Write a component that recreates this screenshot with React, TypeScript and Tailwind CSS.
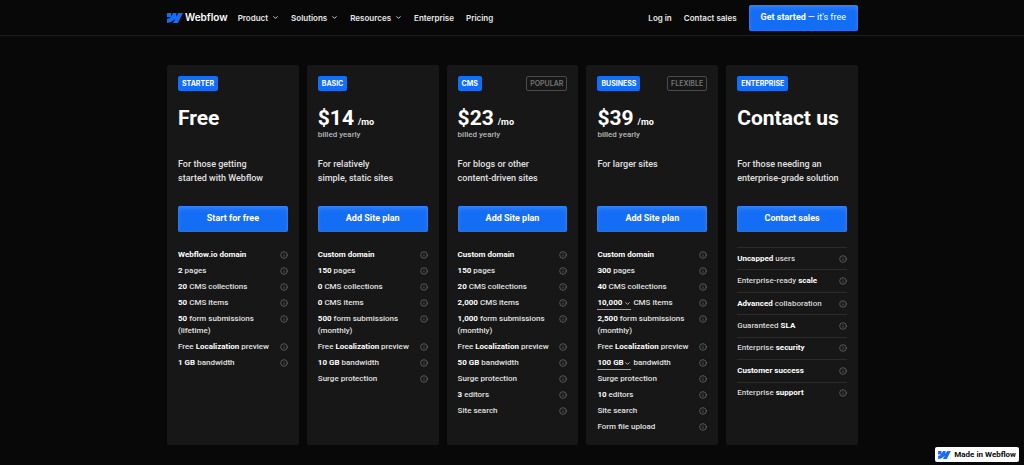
import type { ReactNode } from "react";
import { ChevronDown, Info } from "lucide-react";

type Plan = {
  id: string;
  label: string;
  tag?: string;
  title: string;
  monthly?: boolean;
  lines: string[];
  action: string;
  ruled?: boolean;
  features: ReactNode[];
};

function WebflowMark({ className }: { className: string }) {
  return (
    <svg viewBox="0 4.5 24 15" className={className} fill="#146ef5" aria-hidden="true">
      <path d="m24 4.515-7.658 14.97H9.149l3.205-6.204h-.144C9.566 16.713 5.621 18.973 0 19.485v-6.118s3.596-.213 5.71-2.435H0V4.515h6.417v5.278l.144-.001 2.622-5.277h4.854v5.244h.144l2.72-5.244H24Z" />
    </svg>
  );
}

function Amount({ label, options }: { label: string; options: string[] }) {
  return (
    <span className="relative mr-0.5 -mb-px inline-flex items-center border-b border-[#a0a0a0] align-top">
      <select
        aria-label={label}
        className="h-3 w-[34px] appearance-none bg-transparent font-bold text-white outline-none"
      >
        {options.map((option) => (
          <option key={option} className="bg-[#171717]">
            {option}
          </option>
        ))}
      </select>
      <ChevronDown
        className="pointer-events-none absolute right-0 size-[7px] text-[#c8c8c8]"
        strokeWidth={3}
      />
    </span>
  );
}

const localization = (
  <>
    Free <b>Localization</b> preview
  </>
);

const plans: Plan[] = [
  {
    id: "starter",
    label: "STARTER",
    title: "Free",
    lines: ["For those getting", "started with Webflow"],
    action: "Start for free",
    features: [
      <b>Webflow.io domain</b>,
      <><b>2</b> pages</>,
      <><b>20</b> CMS collections</>,
      <><b>50</b> CMS items</>,
      <><b>50</b> form submissions<br />(lifetime)</>,
      localization,
      <><b>1 GB</b> bandwidth</>,
    ],
  },
  {
    id: "basic",
    label: "BASIC",
    title: "$14",
    monthly: true,
    lines: ["For relatively", "simple, static sites"],
    action: "Add Site plan",
    features: [
      <b>Custom domain</b>,
      <><b>150</b> pages</>,
      <><b>0</b> CMS collections</>,
      <><b>0</b> CMS items</>,
      <><b>500</b> form submissions<br />(monthly)</>,
      localization,
      <><b>10 GB</b> bandwidth</>,
      "Surge protection",
    ],
  },
  {
    id: "cms",
    label: "CMS",
    tag: "POPULAR",
    title: "$23",
    monthly: true,
    lines: ["For blogs or other", "content-driven sites"],
    action: "Add Site plan",
    features: [
      <b>Custom domain</b>,
      <><b>150</b> pages</>,
      <><b>20</b> CMS collections</>,
      <><b>2,000</b> CMS items</>,
      <><b>1,000</b> form submissions<br />(monthly)</>,
      localization,
      <><b>50 GB</b> bandwidth</>,
      "Surge protection",
      <><b>3</b> editors</>,
      "Site search",
    ],
  },
  {
    id: "business",
    label: "BUSINESS",
    tag: "FLEXIBLE",
    title: "$39",
    monthly: true,
    lines: ["For larger sites"],
    action: "Add Site plan",
    features: [
      <b>Custom domain</b>,
      <><b>300</b> pages</>,
      <><b>40</b> CMS collections</>,
      <><Amount label="CMS items" options={["10,000"]} />CMS items</>,
      <><b>2,500</b> form submissions<br />(monthly)</>,
      localization,
      <><Amount label="Bandwidth" options={["100 GB"]} />bandwidth</>,
      "Surge protection",
      <><b>10</b> editors</>,
      "Site search",
      "Form file upload",
    ],
  },
  {
    id: "enterprise",
    label: "ENTERPRISE",
    title: "Contact us",
    lines: ["For those needing an", "enterprise-grade solution"],
    action: "Contact sales",
    ruled: true,
    features: [
      <><b>Uncapped</b> users</>,
      <>Enterprise-ready <b>scale</b></>,
      <><b>Advanced</b> collaboration</>,
      <>Guaranteed <b>SLA</b></>,
      <>Enterprise <b>security</b></>,
      <b>Customer success</b>,
      <>Enterprise <b>support</b></>,
    ],
  },
];

const buttonLook =
  "flex h-[26px] items-center justify-center rounded-xs bg-[#146ef5] font-['Roboto',sans-serif] text-[9px] text-white shadow-[inset_0_3px_4px_rgba(255,255,255,0.12),inset_0_0_2px_rgba(255,255,255,0.15)]";

function PlanCard({ plan }: { plan: Plan }) {
  return (
    <section className="min-w-0 rounded-xs bg-[#171717] px-[11px] pt-[11px] pb-3">
      <div className="flex h-[15px] items-stretch justify-between font-['Inter',sans-serif] text-[7px] leading-none">
        <span className="flex items-center rounded-xs bg-[#146ef5] px-1 font-bold text-white">
          {plan.label}
        </span>
        {plan.tag && (
          <span className="flex items-center rounded-xs border border-[#4a4a4a] px-[3px] font-semibold text-[#757575]">
            {plan.tag}
          </span>
        )}
      </div>
      <div className="mt-4 h-[50px]">
        <h2 className="h-[22px] text-[21px] leading-[22px] font-bold whitespace-nowrap text-white">
          {plan.title}
          {plan.monthly && <span className="ml-1 text-[9px] font-bold">/mo</span>}
        </h2>
        {plan.monthly && (
          <p className="text-[8px] leading-[11px] font-medium text-[#b8b8b8]">billed yearly</p>
        )}
      </div>
      <p className="h-[49px] text-[9px] leading-[14px] font-medium whitespace-nowrap text-[#e0e0e0]">
        {plan.lines.map((line) => (
          <span key={line} className="block">
            {line}
          </span>
        ))}
      </p>
      <button type="button" className={`${buttonLook} w-full font-bold`}>
        {plan.action}
      </button>
      <ul
        className={
          plan.ruled
            ? "mt-[15px] grid h-[157px] auto-rows-fr text-[8px] leading-3 font-medium text-[#d6d6d6]"
            : "mt-[17px] flex flex-col gap-1 text-[8px] leading-3 font-medium text-[#e0e0e0]"
        }
      >
        {plan.features.map((feature, index) => (
          <li
            key={index}
            className={
              plan.ruled
                ? "flex items-center justify-between border-t border-[#2b2b2b] whitespace-nowrap [&_b]:font-bold [&_b]:text-white"
                : "flex items-start justify-between whitespace-nowrap [&_b]:font-bold [&_b]:text-white"
            }
          >
            <span>{feature}</span>
            <span className="flex h-3 items-center">
              <Info className="size-2 text-[#757575]" strokeWidth={2} />
            </span>
          </li>
        ))}
      </ul>
    </section>
  );
}

const menu = [
  { name: "Product", more: true },
  { name: "Solutions", more: true },
  { name: "Resources", more: true },
  { name: "Enterprise", more: false },
  { name: "Pricing", more: false },
];

export default function App() {
  return (
    <div className="min-h-screen bg-[#080808] font-['Roboto','Liberation_Sans',sans-serif] text-white">
      <header className="border-b border-[#1c1c1c] pl-px">
        <div className="mx-auto flex h-[35px] max-w-[691px] items-center justify-between font-['Inter',sans-serif] text-[8px] font-semibold text-[#e8e8e8]">
          <div className="flex items-center">
            <a href="#" className="mr-2.5 flex items-center gap-0.5 text-[10px] font-semibold text-white">
              <WebflowMark className="h-2.5 w-4" />
              Webflow
            </a>
            <nav className="flex items-center gap-3">
              {menu.map((item) =>
                item.more ? (
                  <button key={item.name} type="button" className="flex items-center gap-1">
                    {item.name}
                    <ChevronDown className="size-[7px]" strokeWidth={3} />
                  </button>
                ) : (
                  <a key={item.name} href="#">
                    {item.name}
                  </a>
                ),
              )}
            </nav>
          </div>
          <div className="flex items-center gap-3">
            <a href="#">Log in</a>
            <a href="#">Contact sales</a>
            <a href="#" className={`${buttonLook} gap-0.5 px-3`}>
              <b className="font-bold">Get started</b>
              <span className="font-normal">— it's free</span>
            </a>
          </div>
        </div>
      </header>
      <main className="pt-[29px] pb-5 pl-px">
        <div className="mx-auto grid max-w-[691px] grid-cols-5 gap-2">
          {plans.map((plan) => (
            <PlanCard key={plan.id} plan={plan} />
          ))}
        </div>
      </main>
      <a
        href="#"
        className="fixed right-[5px] bottom-[3px] flex h-[15px] items-center gap-[3px] rounded-xs bg-white px-[3px] font-['Roboto',sans-serif] text-[8px] font-bold text-[#080808]"
      >
        <WebflowMark className="h-2 w-[13px]" />
        Made in Webflow
      </a>
    </div>
  );
}
